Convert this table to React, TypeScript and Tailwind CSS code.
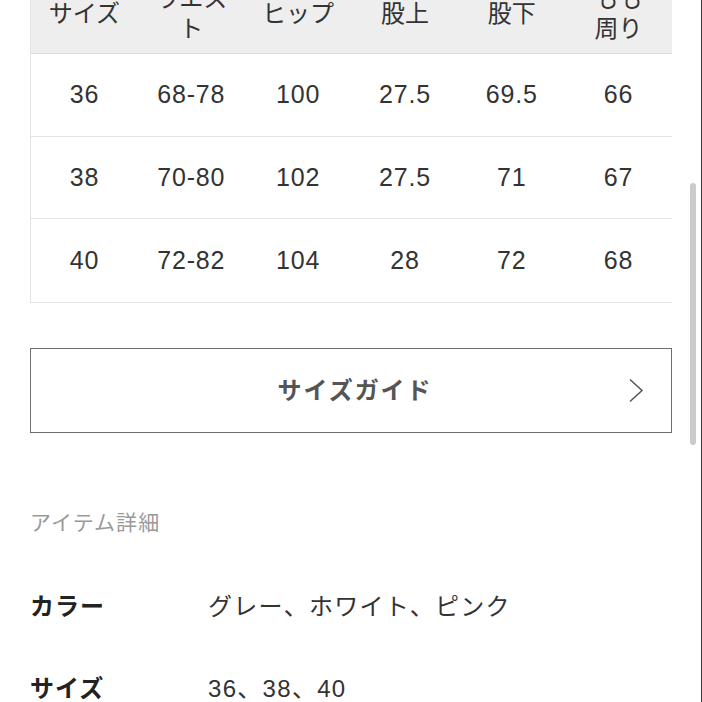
const headers: string[][] = [
  ['サイズ'],
  ['ウエス', 'ト'],
  ['ヒップ'],
  ['股上'],
  ['股下'],
  ['もも', '周り'],
];

const rows: string[][] = [
  ['36', '68-78', '100', '27.5', '69.5', '66'],
  ['38', '70-80', '102', '27.5', '71', '67'],
  ['40', '72-82', '104', '28', '72', '68'],
];

const details = [
  { label: 'カラー', value: 'グレー、ホワイト、ピンク' },
  { label: 'サイズ', value: '36、38、40' },
];

export default function App() {
  return (
    <div
      className="relative h-[702px] w-[702px] overflow-hidden bg-white text-[#333]"
      style={{ fontFamily: '"Liberation Sans", "Noto Sans CJK JP", sans-serif' }}
    >
      <div className="-mt-[26px] pl-[30px]">
        {/* size table, scrolled so the header is cut at the top */}
        <div className="w-[642px] overflow-hidden border-l border-b border-[#e4e4e4]">
          <div className="grid h-[80px] grid-cols-6 items-center border-b border-[#dadada] bg-[#eeeeee]">
            {headers.map((lines, i) => (
              <div key={i} className="text-center text-[24px] leading-[30px] text-[#333]">
                {lines.map((l, j) => (
                  <div key={j}>{l}</div>
                ))}
              </div>
            ))}
          </div>
          {rows.map((row, i) => (
            <div
              key={i}
              className={`grid h-[82.7px] grid-cols-6 items-center ${i < rows.length - 1 ? 'border-b border-[#e4e4e4]' : ''}`}
            >
              {row.map((cell, j) => (
                <div key={j} className="text-center text-[25px] tracking-[0.8px] text-[#333]">
                  {cell}
                </div>
              ))}
            </div>
          ))}
        </div>

        <button className="mt-[45px] grid h-[85px] w-[642px] grid-cols-[1fr_auto_1fr] items-center border border-[#6e6e6e] bg-white">
          <span />
          <span className="pl-[8px] text-[24px] font-bold tracking-[0.08em] text-[#555]">サイズガイド</span>
          <span className="flex justify-end pr-[27px]">
            <svg width="16" height="25" viewBox="0 0 16 25" fill="none">
              <polyline points="2,1.5 14,12.5 2,23.5" stroke="#555" strokeWidth="1.5" />
            </svg>
          </span>
        </button>

        <div className="mt-[75px] text-[21px] leading-[30px] tracking-[0.05em] text-[#9a9a9a]">アイテム詳細</div>

        <div className="mt-[28px]">
          {details.map((d) => (
            <div key={d.label} className="flex h-[82px] items-center text-[24px]">
              <div className="w-[178px] font-bold tracking-[1px] text-[#222]">{d.label}</div>
              <div className="tracking-[1.3px] text-[#333]">{d.value}</div>
            </div>
          ))}
        </div>
      </div>

      {/* scrollbar */}
      <div className="absolute left-[690px] top-[183px] h-[262px] w-[6px] rounded-full bg-[#cbcbcb]" />
      <div className="absolute right-0 top-0 h-full w-[1px] bg-[#3a3a3a]" />
    </div>
  );
}
